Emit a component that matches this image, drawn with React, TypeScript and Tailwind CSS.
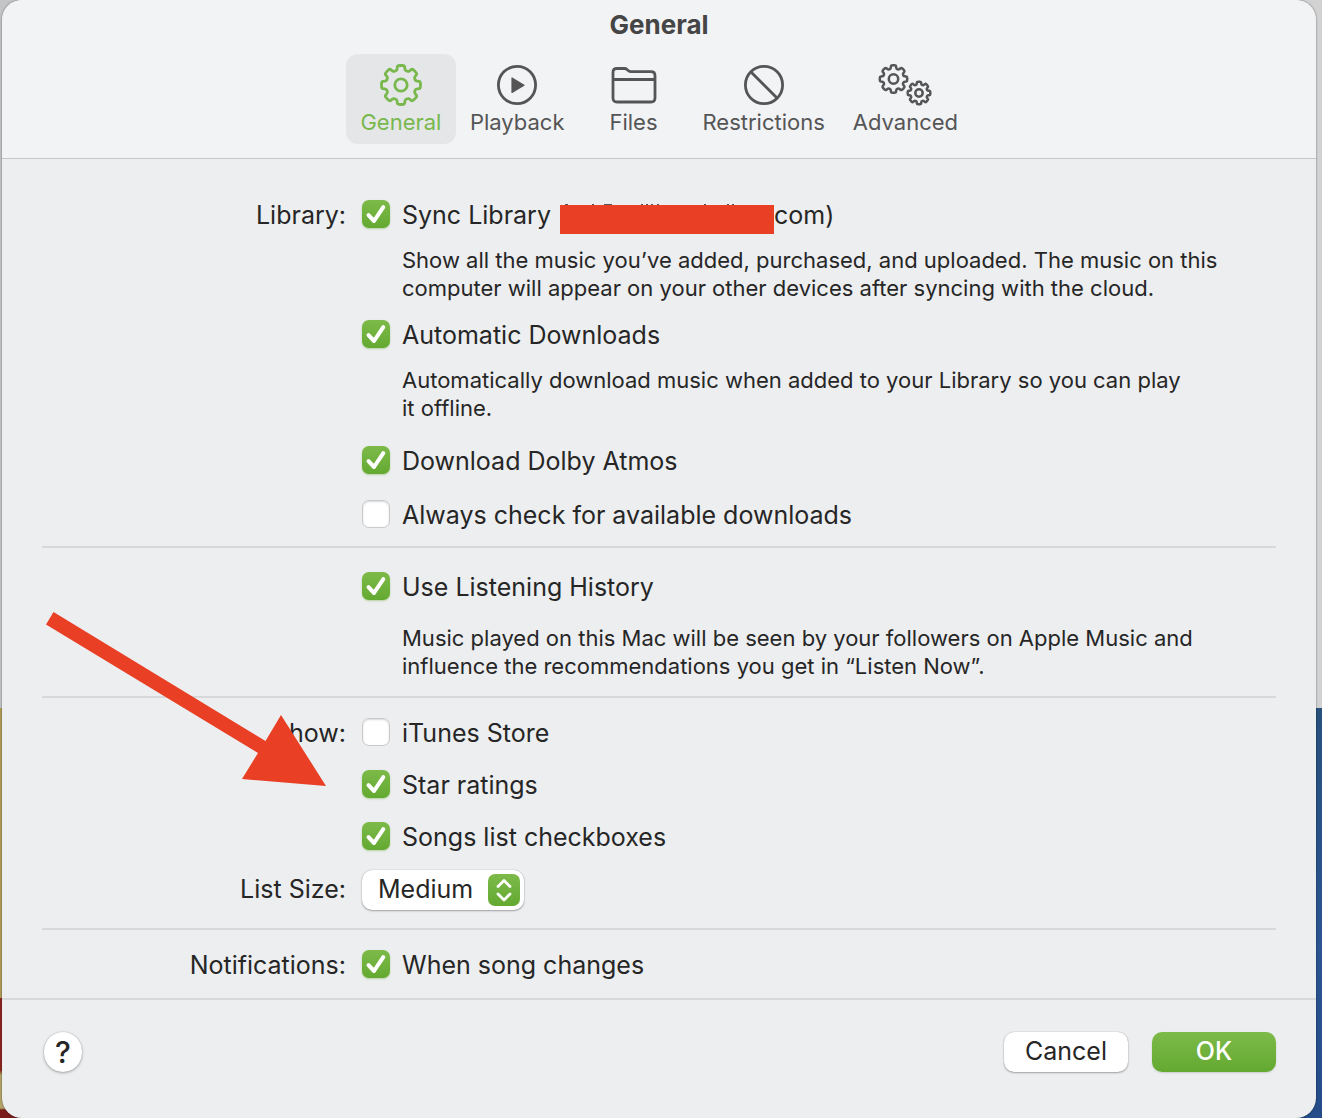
import { useState } from "react";

const LABEL = "h-7 text-[25px] leading-[30px] text-[#262626]";

// Closed gear outline with softened corners
function gearPath(cx: number, cy: number, outer: number, inner: number) {
  const pts: number[][] = [];
  for (let i = 0; i < 8; i++) {
    const a = (i * Math.PI) / 4;
    [
      [inner, -0.27],
      [outer, -0.18],
      [outer, 0.18],
      [inner, 0.27],
    ].forEach(([r, d]) => {
      pts.push([cx + r * Math.sin(a + d), cy - r * Math.cos(a + d)]);
    });
  }
  const near = (p: number[], q: number[], t: number) =>
    `${(p[0] + (q[0] - p[0]) * t).toFixed(2)} ${(p[1] + (q[1] - p[1]) * t).toFixed(2)}`;
  const parts = pts.map((p, i) => {
    const prev = pts[(i + pts.length - 1) % pts.length];
    const next = pts[(i + 1) % pts.length];
    return `${i ? "L" : "M"}${near(p, prev, 0.32)} Q${p[0].toFixed(2)} ${p[1].toFixed(2)} ${near(p, next, 0.32)}`;
  });
  return parts.join(" ") + "Z";
}

function GeneralIcon() {
  return (
    <svg width="44" height="44" viewBox="0 0 44 44" fill="none" stroke="currentColor" strokeWidth="2.8">
      <path d={gearPath(22, 22, 19.8, 15.2)} strokeLinejoin="round" />
      <circle cx="22" cy="22" r="6.2" />
    </svg>
  );
}

function PlaybackIcon() {
  return (
    <svg width="44" height="44" viewBox="0 0 44 44" fill="none" stroke="currentColor" strokeWidth="2.8">
      <circle cx="22" cy="22" r="18.6" />
      <path d="M17 15v14.4l12-7.2z" fill="currentColor" strokeWidth="1.2" strokeLinejoin="round" />
    </svg>
  );
}

function FilesIcon() {
  return (
    <svg width="46" height="44" viewBox="0 0 46 44" fill="none" stroke="currentColor" strokeWidth="2.8">
      <path
        d="M2 9.5q0-4 4-4h7.5q1.5 0 2.5 1l1.5 1.3q1 .9 2.7.9H40q4 0 4 4V35q0 4-4 4H6q-4 0-4-4zM2 16.5h42"
        strokeLinejoin="round"
      />
    </svg>
  );
}

function RestrictionsIcon() {
  return (
    <svg width="44" height="44" viewBox="0 0 44 44" fill="none" stroke="currentColor" strokeWidth="2.8">
      <circle cx="22" cy="22" r="18.6" />
      <path d="M9 9l26 26" />
    </svg>
  );
}

function AdvancedIcon() {
  return (
    <svg width="56" height="44" viewBox="0 0 56 44" fill="none" stroke="currentColor" strokeWidth="2.5">
      <path d={gearPath(16.5, 16, 13.9, 10.6)} strokeLinejoin="round" />
      <circle cx="16.5" cy="16" r="4.7" />
      <path d={gearPath(42, 30, 11.5, 8.7)} strokeLinejoin="round" />
      <circle cx="42" cy="30" r="3.7" />
    </svg>
  );
}

const tabs = [
  { name: "General", icon: <GeneralIcon /> },
  { name: "Playback", icon: <PlaybackIcon /> },
  { name: "Files", icon: <FilesIcon /> },
  { name: "Restrictions", icon: <RestrictionsIcon /> },
  { name: "Advanced", icon: <AdvancedIcon /> },
];

function Check({ id, on = false, children }: { id: string; on?: boolean; children: React.ReactNode }) {
  const [checked, setChecked] = useState(on);
  return (
    <div className="flex h-7 items-center gap-3">
      <span className="grid size-7 shrink-0">
        <input
          id={id}
          type="checkbox"
          checked={checked}
          onChange={() => setChecked(!checked)}
          className="peer col-start-1 row-start-1 size-7 appearance-none rounded-[7px] border border-[#c9c9ca] bg-white shadow-[inset_0_1px_2px_rgba(0,0,0,0.15)] checked:border-0 checked:bg-linear-to-b checked:from-[#7dba49] checked:to-[#63a930] checked:shadow-[0_1px_2px_rgba(99,169,48,0.4)]"
        />
        <svg
          viewBox="0 0 28 28"
          className="pointer-events-none invisible col-start-1 row-start-1 size-7 peer-checked:visible"
          fill="none"
          stroke="white"
          strokeWidth="4"
          strokeLinecap="round"
          strokeLinejoin="round"
        >
          <path d="M6.5 15.2L12 21L21.3 7.2" />
        </svg>
      </span>
      <label htmlFor={id} className={`flex whitespace-pre ${LABEL}`}>
        {children}
      </label>
    </div>
  );
}

function Row({ label, htmlFor, children }: { label?: string; htmlFor?: string; children: React.ReactNode }) {
  return (
    <div className="grid grid-cols-[304px_1fr] items-center gap-x-4">
      {label ? (
        <label htmlFor={htmlFor} className={`text-right ${LABEL}`}>
          {label}
        </label>
      ) : (
        <span />
      )}
      {children}
    </div>
  );
}

function Note({ children }: { children: React.ReactNode }) {
  return <p className="ml-[360px] text-[22px] leading-7 text-[#262626]">{children}</p>;
}

function Redacted() {
  return (
    <span className="relative mt-[5px] h-[29px] w-[214px] shrink-0 bg-[#e83f25]">
      <svg className="absolute -top-px left-0" width="214" height="1" stroke="#555" strokeWidth="2">
        <path d="M5 1h3M32 1h2M44 1h8M81 1h2M86 1h2M91 1h2M97 1h2M144 1h2M167 1h2M172 1h2" />
      </svg>
    </span>
  );
}

export default function App() {
  const [active, setActive] = useState("General");
  const [size, setSize] = useState("Medium");

  return (
    <div className="min-h-screen bg-[linear-gradient(#c4c5c7_708px,#b19d58_708px,#b19d58_998px,#8f2620_998px,#8f2620_1070px,#b5a76a_1075px,#b5a76a_1108px,#7a1d1a_1110px),linear-gradient(#d2d2d3_708px,#27507c_708px,#2a5591_950px,#244c88)] bg-[length:50%_100%] bg-[position:left,right] bg-no-repeat pr-1.5 pl-0.5 font-['Inter',sans-serif]">
      <div className="relative min-h-screen overflow-hidden rounded-[20px] bg-[#edeef0] shadow-[0_0_2px_rgba(0,0,0,0.6)]">
        <header className="border-b border-[#c6c7c9] bg-[#f2f3f5] pt-2 pb-3.5">
          <h1 className="mb-3 text-center text-[26px] leading-[34px] font-bold text-[#454545]">General</h1>
          <nav className="flex justify-center">
            {tabs.map((tab) => (
              <button
                key={tab.name}
                onClick={() => setActive(tab.name)}
                className={`flex h-[90px] min-w-[110px] flex-col items-center rounded-xl px-3.5 pt-[9px] ${
                  active === tab.name ? "bg-[#e5e6e8] text-[#78b84d]" : "text-[#555]"
                }`}
              >
                {tab.icon}
                <span className="text-[22px] leading-[30px]">{tab.name}</span>
              </button>
            ))}
          </nav>
        </header>

        <main>
          <section className="mx-10 border-b-2 border-[#d7d8da] pt-[41px] pb-[18px]">
            <Row label="Library:" htmlFor="sync">
              <Check id="sync" on>
                <span className="w-[158px]">Sync Library</span>
                <Redacted />
                <span>com)</span>
              </Check>
            </Row>
            <div className="py-[18px]">
              <Note>
                Show all the music you’ve added, purchased, and uploaded. The music on this
                <br />
                computer will appear on your other devices after syncing with the cloud.
              </Note>
            </div>
            <Row>
              <Check id="auto" on>Automatic Downloads</Check>
            </Row>
            <div className="pt-[18px] pb-6">
              <Note>
                Automatically download music when added to your Library so you can play
                <br />
                it offline.
              </Note>
            </div>
            <div className="flex flex-col gap-[26px]">
              <Row>
                <Check id="dolby" on>Download Dolby Atmos</Check>
              </Row>
              <Row>
                <Check id="always">Always check for available downloads</Check>
              </Row>
            </div>
          </section>

          <section className="mx-10 flex flex-col gap-6 border-b-2 border-[#d7d8da] pt-6 pb-4">
            <Row>
              <Check id="history" on>Use Listening History</Check>
            </Row>
            <Note>
              Music played on this Mac will be seen by your followers on Apple Music and
              <br />
              influence the recommendations you get in “Listen Now”.
            </Note>
          </section>

          <section className="mx-10 border-b-2 border-[#d7d8da] pt-5 pb-[22px]">
            <div className="mb-5 flex flex-col gap-6">
              <Row label="Show:" htmlFor="store">
                <Check id="store">iTunes Store</Check>
              </Row>
              <Row>
                <Check id="stars" on>Star ratings</Check>
              </Row>
              <Row>
                <Check id="boxes" on>Songs list checkboxes</Check>
              </Row>
            </div>
            <Row label="List Size:" htmlFor="size">
              <div className="relative h-9 w-[162px]">
                <select
                  id="size"
                  value={size}
                  onChange={(e) => setSize(e.target.value)}
                  className="h-10 w-full appearance-none rounded-[10px] bg-white pb-0.5 pl-4 text-[25px] leading-7 text-[#262626] shadow-[0_0_1px_rgba(0,0,0,0.35),0_1px_2px_rgba(0,0,0,0.3)]"
                >
                  <option>Small</option>
                  <option>Medium</option>
                  <option>Large</option>
                </select>
                <span className="pointer-events-none absolute top-1 right-1 size-8 rounded-[7px] bg-linear-to-b from-[#7dba49] to-[#63a930]">
                  <svg
                    viewBox="0 0 32 32"
                    fill="none"
                    stroke="white"
                    strokeWidth="2.8"
                    strokeLinecap="round"
                    strokeLinejoin="round"
                  >
                    <path d="M10 12.5L16 6.5L22 12.5M10 20L16 26L22 20" />
                  </svg>
                </span>
              </div>
            </Row>
          </section>

          <section className="mx-10 py-5">
            <Row label="Notifications:" htmlFor="song">
              <Check id="song" on>When song changes</Check>
            </Row>
          </section>
        </main>

        <footer className="flex items-center gap-6 border-t-2 border-[#d7d8da] px-10 pt-8 pb-[46px] text-[25px] leading-7">
          <button
            aria-label="Help"
            className="mr-auto ml-0.5 h-10 w-[38px] rounded-full bg-white text-[30px] font-medium text-[#262626] shadow-[0_0_1px_rgba(0,0,0,0.3),0_1px_3px_rgba(0,0,0,0.3)]"
          >
            ?
          </button>
          <button className="h-10 w-[124px] rounded-[10px] bg-white pb-0.5 text-[#262626] shadow-[0_0_1px_rgba(0,0,0,0.35),0_1px_2px_rgba(0,0,0,0.3)]">
            Cancel
          </button>
          <button className="h-10 w-[124px] rounded-[10px] bg-linear-to-b from-[#7dba49] to-[#63a930] pb-0.5 font-medium text-white shadow-[0_1px_2px_rgba(0,0,0,0.15)]">
            OK
          </button>
        </footer>

        {/* pointer to the star ratings option */}
        <svg className="pointer-events-none absolute top-[611px] left-[43px]" width="282" height="176" viewBox="0 0 282 176">
          <path d="M8.5 1L220.5 130L236 104L281 175L197 168L213 142L1 13.5Z" fill="#e83f25" />
        </svg>
      </div>
    </div>
  );
}
